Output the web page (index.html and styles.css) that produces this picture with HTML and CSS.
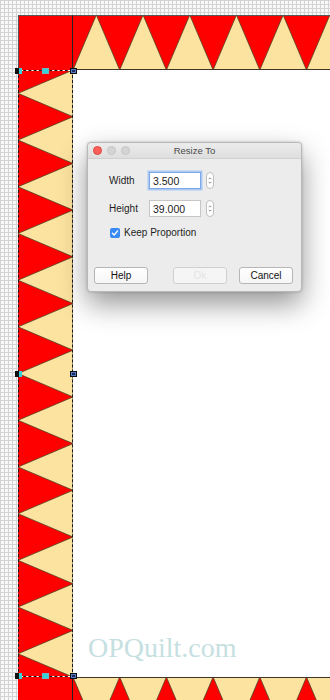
FILE: index.html
```html
<!DOCTYPE html>
<html lang="en">
<head>
    <meta charset="UTF-8">
    <meta name="viewport" content="width=device-width, initial-scale=1.0">
    <title>Resize To</title>
    <link rel="stylesheet" href="styles.css">
</head>
<body>
    <div class="quilt">
        <div class="corner corner-top"></div>

        <div class="strip strip-top">
            <svg width="280" height="55" viewBox="0 0 280 55">
                <rect width="280" height="55" fill="#ff0000"/>
                <g fill="#fde3a0" stroke="#4f4226" stroke-width="0.8">
                    <polygon points="0,55 23.35,0 46.7,55"/>
                    <polygon points="46.7,55 70.05,0 93.4,55"/>
                    <polygon points="93.4,55 116.75,0 140.1,55"/>
                    <polygon points="140.1,55 163.45,0 186.8,55"/>
                    <polygon points="186.8,55 210.15,0 233.5,55"/>
                    <polygon points="233.5,55 256.85,0 280.2,55"/>
                </g>
                <line x1="0" y1="0.5" x2="280" y2="0.5" stroke="#555"/>
                <line x1="0" y1="54.5" x2="280" y2="54.5" stroke="#3f3524"/>
            </svg>
        </div>

        <div class="strip strip-left">
            <svg width="55" height="607" viewBox="0 0 55 607">
                <rect width="55" height="607" fill="#ff0000"/>
                <g fill="#fde3a0" stroke="#4f4226" stroke-width="0.8">
                    <polygon points="55,0 0,23.35 55,46.7"/>
                    <polygon points="55,46.7 0,70.05 55,93.4"/>
                    <polygon points="55,93.4 0,116.75 55,140.1"/>
                    <polygon points="55,140.1 0,163.45 55,186.8"/>
                    <polygon points="55,186.8 0,210.15 55,233.5"/>
                    <polygon points="55,233.5 0,256.85 55,280.2"/>
                    <polygon points="55,280.2 0,303.55 55,326.9"/>
                    <polygon points="55,326.9 0,350.25 55,373.6"/>
                    <polygon points="55,373.6 0,396.95 55,420.3"/>
                    <polygon points="55,420.3 0,443.65 55,467"/>
                    <polygon points="55,467 0,490.35 55,513.7"/>
                    <polygon points="55,513.7 0,537.05 55,560.4"/>
                    <polygon points="55,560.4 0,583.75 55,607.1"/>
                </g>
            </svg>

            <!-- selection box with resize handles -->
            <div class="selection">
                <span class="handle handle-outer h-tl"></span>
                <span class="handle handle-mid h-tm"></span>
                <span class="handle handle-inner h-tr"></span>
                <span class="handle handle-outer h-ml"></span>
                <span class="handle handle-inner h-mr"></span>
                <span class="handle handle-outer h-bl"></span>
                <span class="handle handle-mid h-bm"></span>
                <span class="handle handle-inner h-br"></span>
            </div>
        </div>

        <div class="center">
            <div class="watermark">OPQuilt.com</div>
        </div>

        <div class="corner corner-bottom"></div>

        <div class="strip strip-bottom">
            <svg width="280" height="55" viewBox="0 0 280 55">
                <rect width="280" height="55" fill="#ff0000"/>
                <g fill="#fde3a0" stroke="#4f4226" stroke-width="0.8">
                    <polygon points="0,0 23.35,55 46.7,0"/>
                    <polygon points="46.7,0 70.05,55 93.4,0"/>
                    <polygon points="93.4,0 116.75,55 140.1,0"/>
                    <polygon points="140.1,0 163.45,55 186.8,0"/>
                    <polygon points="186.8,0 210.15,55 233.5,0"/>
                    <polygon points="233.5,0 256.85,55 280.2,0"/>
                </g>
                <line x1="0" y1="0.5" x2="280" y2="0.5" stroke="#3f3524"/>
            </svg>
        </div>
    </div>

    <div class="dialog">
        <div class="titlebar">
            <div class="lights">
                <span class="light close"></span>
                <span class="light"></span>
                <span class="light"></span>
            </div>
            <div class="title">Resize To</div>
        </div>

        <div class="dialog-body">
            <div class="field">
                <label for="width">Width</label>
                <input id="width" class="num focused" type="text" value="3.500">
                <span class="stepper">
                    <svg width="8" height="15" viewBox="0 0 8 15">
                        <path d="M2.3 5.6 L4 3.9 L5.7 5.6 M2.3 9.4 L4 11.1 L5.7 9.4" fill="none" stroke="#555" stroke-width="0.9"/>
                    </svg>
                </span>
            </div>
            <div class="field">
                <label for="height">Height</label>
                <input id="height" class="num" type="text" value="39.000">
                <span class="stepper">
                    <svg width="8" height="15" viewBox="0 0 8 15">
                        <path d="M2.3 5.6 L4 3.9 L5.7 5.6 M2.3 9.4 L4 11.1 L5.7 9.4" fill="none" stroke="#555" stroke-width="0.9"/>
                    </svg>
                </span>
            </div>
            <label class="check">
                <span class="box">
                    <svg width="10" height="10" viewBox="0 0 10 10">
                        <path d="M2.4 5.2 L4.2 7 L7.6 2.9" fill="none" stroke="#fff" stroke-width="1.4" stroke-linecap="round" stroke-linejoin="round"/>
                    </svg>
                </span>
                Keep Proportion
            </label>
        </div>

        <div class="actions">
            <button class="btn-help">Help</button>
            <button disabled>Ok</button>
            <button>Cancel</button>
        </div>
    </div>
</body>
</html>
```

FILE: styles.css
```css
:root {
    --red: #ff0000;
    --tan: #fde3a0;
    --line: #3f3524;
    --cyan: #33d3dc;
    --dialog-bg: #ececec;
}

* {
    box-sizing: border-box;
}

html,
body {
    margin: 0;
    height: 100%;
    overflow: hidden;
}

body {
    position: relative;
    background-color: #f8f8f8;
    background-image:
        linear-gradient(#d3d3d3 1px, transparent 1px),
        linear-gradient(90deg, #d3d3d3 1px, transparent 1px);
    background-size: 4px 4px;
    font-family: "Liberation Sans", Arial, sans-serif;
}

/* quilt layout */

.quilt {
    display: grid;
    grid-template-columns: 55px 1fr;
    grid-template-rows: 55px 607px 55px;
    margin: 15px 0 0 18px;
}

.corner {
    background-color: var(--red);
    border-right: 1px solid #222;
}

.corner-top {
    border-top: 1px solid #555;
    border-left: 1px solid #555;
}

.strip {
    overflow: hidden;
}

.strip svg {
    display: block;
}

.strip-left {
    position: relative;
    overflow: visible;
}

.center {
    background-color: #fff;
    display: flex;
    align-items: flex-end;
    padding: 0 0 15px 15px;
}

.watermark {
    font-family: "Liberation Serif", serif;
    font-size: 28px;
    line-height: 28px;
    color: #c6e0e1;
}

/* selection box */

.selection {
    position: absolute;
    inset: 0;
    border-top: 1px solid #fff;
    border-bottom: 1px solid #fff;
}

.selection::before {
    content: "";
    position: absolute;
    top: -1px;
    bottom: -1px;
    left: 0;
    right: 0;
    border: 1px dashed #1a1a1a;
}

.handle {
    position: absolute;
    width: 7px;
    height: 6px;
}

.handle-outer {
    background: linear-gradient(90deg, #111 55%, var(--cyan) 55%);
}

.handle-mid {
    background-color: var(--cyan);
    border: 1px solid #6fb8c0;
}

.handle-inner {
    background-color: #1c2a62;
    border: 1px solid #0d0d0d;
    box-shadow: inset 0 0 0 1px #5a7cc0;
}

.h-tl { left: -3px; top: -3px; }
.h-tm { left: 24px; top: -3px; }
.h-tr { left: 52px; top: -3px; }
.h-ml { left: -3px; top: 300px; }
.h-mr { left: 52px; top: 300px; }
.h-bl { left: -3px; bottom: -3px; }
.h-bm { left: 24px; bottom: -3px; }
.h-br { left: 52px; bottom: -3px; }

/* dialog */

.dialog {
    position: absolute;
    left: 87px;
    top: 142px;
    width: 215px;
    height: 150px;
    display: flex;
    flex-direction: column;
    background-color: var(--dialog-bg);
    border: 1px solid #b8b8b8;
    border-radius: 4px;
    box-shadow: 0 12px 28px rgba(0, 0, 0, 0.42), 0 0 3px rgba(0, 0, 0, 0.2);
    font-size: 10px;
    color: #1e1e1e;
}

.titlebar {
    display: grid;
    grid-template-columns: 1fr auto 1fr;
    align-items: center;
    height: 16px;
    background: linear-gradient(#ececec, #dedede);
    border-bottom: 1px solid #d0d0d0;
    border-radius: 4px 4px 0 0;
}

.lights {
    display: flex;
    gap: 5px;
    padding-left: 5px;
}

.light {
    width: 9px;
    height: 9px;
    border-radius: 50%;
    background-color: #d4d4d4;
    border: 1px solid #c6c6c6;
}

.light.close {
    background-color: #fc5f57;
    border-color: #e2463f;
}

.title {
    color: #4a4a4a;
    font-size: 9.5px;
}

.dialog-body {
    display: flex;
    flex-direction: column;
    gap: 11px;
    padding: 13px 0 0 21px;
}

.field {
    display: flex;
    align-items: center;
}

.field label {
    width: 40px;
}

.num {
    width: 52px;
    height: 17px;
    padding: 0 3px;
    border: 1px solid #c6c6c6;
    background-color: #fff;
    font-family: inherit;
    font-size: 10.5px;
    color: #222;
    outline: none;
}

.num.focused {
    border-color: #7ea8e6;
    box-shadow: 0 0 0 1.5px #a9c9f3;
}

.stepper {
    display: flex;
    align-items: center;
    justify-content: center;
    margin-left: 5px;
    width: 8px;
    height: 17px;
    background-color: #fff;
    border: 1px solid #bfbfbf;
    border-radius: 4px;
}

.check {
    display: flex;
    align-items: center;
    gap: 4px;
    margin-top: -1px;
    padding-left: 1px;
}

.box {
    display: flex;
    width: 10px;
    height: 10px;
    border-radius: 2px;
    background-color: #3a8af4;
}

.actions {
    display: flex;
    justify-content: flex-end;
    gap: 12px;
    margin-top: auto;
    padding: 0 8px 7px 6px;
}

button {
    width: 54px;
    height: 17px;
    padding: 0;
    background: linear-gradient(#ffffff, #f6f6f6);
    border: 1px solid #b6b6b6;
    border-radius: 3px;
    font-family: inherit;
    font-size: 10px;
    color: #111;
}

button:disabled {
    background: #f5f5f5;
    border-color: #d0d0d0;
    color: #e4e4e4;
}

.btn-help {
    margin-right: auto;
}
```
